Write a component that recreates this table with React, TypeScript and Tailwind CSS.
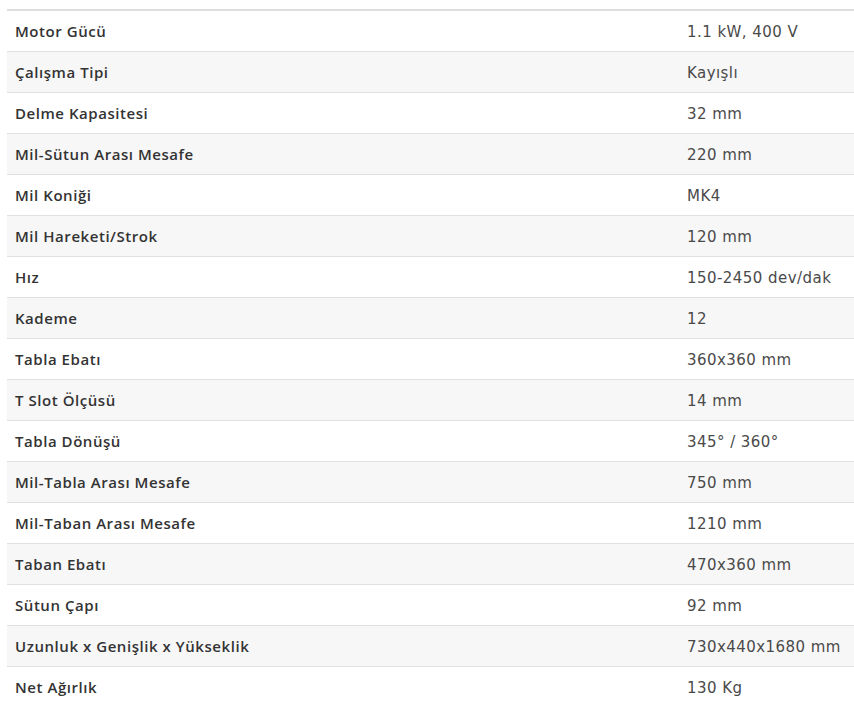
const specs = [
  ["Motor Gücü", "1.1 kW, 400 V"],
  ["Çalışma Tipi", "Kayışlı"],
  ["Delme Kapasitesi", "32 mm"],
  ["Mil-Sütun Arası Mesafe", "220 mm"],
  ["Mil Koniği", "MK4"],
  ["Mil Hareketi/Strok", "120 mm"],
  ["Hız", "150-2450 dev/dak"],
  ["Kademe", "12"],
  ["Tabla Ebatı", "360x360 mm"],
  ["T Slot Ölçüsü", "14 mm"],
  ["Tabla Dönüşü", "345° / 360°"],
  ["Mil-Tabla Arası Mesafe", "750 mm"],
  ["Mil-Taban Arası Mesafe", "1210 mm"],
  ["Taban Ebatı", "470x360 mm"],
  ["Sütun Çapı", "92 mm"],
  ["Uzunluk x Genişlik x Yükseklik", "730x440x1680 mm"],
  ["Net Ağırlık", "130 Kg"],
];

export default function App() {
  return (
    <div className="w-[854px] h-[706px] overflow-hidden bg-white pt-[9px] pl-[7px]">
      <div className="border-t-2 border-[#dedede]">
        {specs.map(([label, value], i) => (
          <div
            key={label}
            className={`grid grid-cols-[672px_1fr] h-[41px] items-center border-b border-[#e1e1e1] text-[15px] ${
              i % 2 === 1 ? "bg-[#f7f7f7]" : "bg-white"
            }`}
          >
            <div className="px-2 font-['Open_Sans',sans-serif] font-semibold tracking-[0.55px] text-[#333]">
              {label}
            </div>
            <div className="px-2 pt-[2px] font-['DejaVu_Sans',sans-serif] text-[15px] tracking-[0.45px] text-[#4a4a4a]">
              {value}
            </div>
          </div>
        ))}
      </div>
    </div>
  );
}
